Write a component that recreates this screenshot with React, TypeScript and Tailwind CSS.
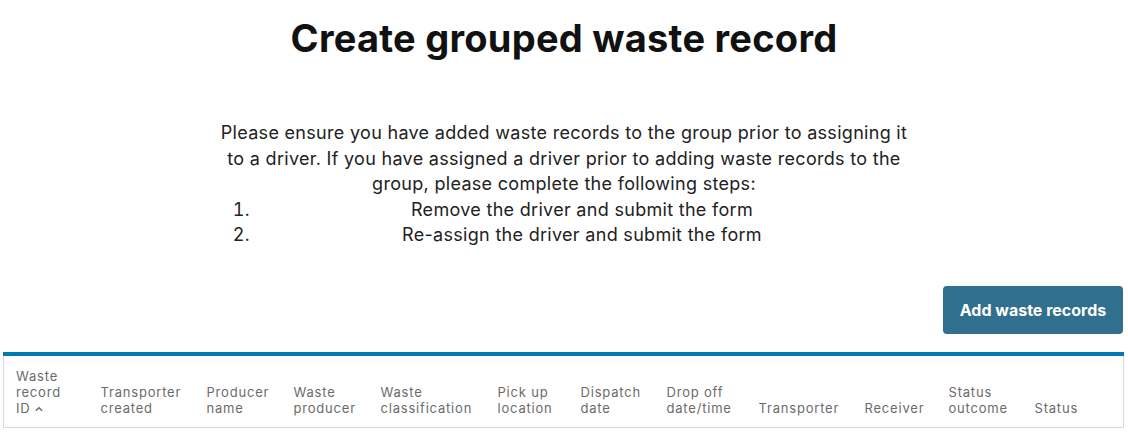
import React from "react"

const columns = [
  { label: ["Waste", "record", "ID"], w: "w-[85px]", sort: true },
  { label: ["Transporter", "created"], w: "w-[106px]" },
  { label: ["Producer", "name"], w: "w-[87px]" },
  { label: ["Waste", "producer"], w: "w-[87px]" },
  { label: ["Waste", "classification"], w: "w-[117px]" },
  { label: ["Pick up", "location"], w: "w-[83px]" },
  { label: ["Dispatch", "date"], w: "w-[86px]" },
  { label: ["Drop off", "date/time"], w: "w-[92px]" },
  { label: ["Transporter"], w: "w-[106px]" },
  { label: ["Receiver"], w: "w-[84px]" },
  { label: ["Status", "outcome"], w: "w-[86px]" },
  { label: ["Status"], w: "" },
]

function ChevronUp() {
  return (
    <svg viewBox="0 0 10 6" className="ml-[5px] inline-block h-[6px] w-[8px] align-[1px]" fill="none" stroke="currentColor" strokeWidth="1.8">
      <path d="M1 5.2 L5 1.5 L9 5.2" />
    </svg>
  )
}

export default function App() {
  return (
    <div className="min-h-[432px] bg-white text-[#1b1b1b]" style={{ fontFamily: "Inter, 'Noto Sans', sans-serif" }}>
      <h1 className="pt-[14px] text-center text-[38px] font-bold leading-[48px] tracking-[0.25px] text-[#111]">
        Create grouped waste record
      </h1>

      <div className="mx-auto mt-[58px] w-[690px] text-center text-[18px] leading-[25.5px] tracking-[0.3px] text-[#222]">
        <p>
          Please ensure you have added waste records to the group prior to assigning it to a driver. If you have
          assigned a driver prior to adding waste records to the group, please complete the following steps:
        </p>
        <ol className="list-decimal pl-9">
          <li>Remove the driver and submit the form</li>
          <li>Re-assign the driver and submit the form</li>
        </ol>
      </div>

      <div className="mt-[38px] flex justify-end pr-[5px]">
        <button className="h-[48px] w-[180px] rounded-[4px] bg-[#316f8e] text-[16px] font-bold text-white">
          Add waste records
        </button>
      </div>

      <div className="ml-[3px] mr-[4px] mt-[18px] border-t-4 border-t-[#0079b8]">
        <table className="w-full table-fixed border border-t-0 border-[#d9d9d9]">
          <thead>
            <tr>
              {columns.map((c, i) => (
                <th
                  key={i}
                  className={`${c.w} px-3 pb-[11px] pt-[12px] text-left align-bottom text-[13px] font-normal leading-4 tracking-[0.8px] text-[#6b6b6b]`}
                >
                  {c.label.map((l, j) => (
                    <div key={j}>
                      {l}
                      {c.sort && j === c.label.length - 1 && <ChevronUp />}
                    </div>
                  ))}
                </th>
              ))}
            </tr>
          </thead>
        </table>
      </div>
    </div>
  )
}
